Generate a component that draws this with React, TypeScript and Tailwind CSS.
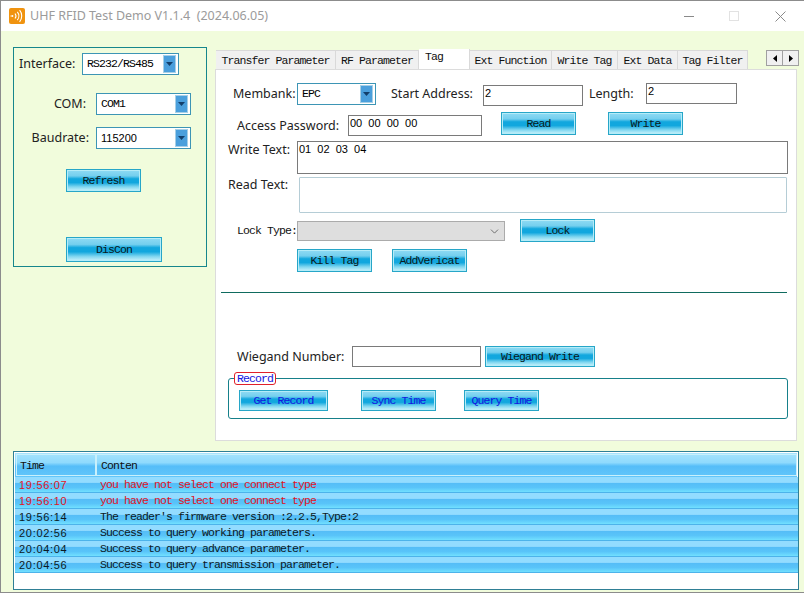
import React from 'react';
import { ChevronDown } from 'lucide-react';

const logRows = [
    { time: '19:56:07', text: 'you have not select one connect type', error: true },
    { time: '19:56:10', text: 'you have not select one connect type', error: true },
    { time: '19:56:14', text: "The reader's firmware version :2.2.5,Type:2", error: false },
    { time: '20:02:56', text: 'Success to query working parameters.', error: false },
    { time: '20:04:04', text: 'Success to query advance parameter.', error: false },
    { time: '20:04:56', text: 'Success to query transmission parameter.', error: false },
];

const tabs = [
    { label: 'Transfer Parameter', width: 'w-[120px]' },
    { label: 'RF Parameter', width: 'w-[83px]' },
    { label: 'Tag', width: 'w-[51px]', active: true },
    { label: 'Ext Function', width: 'w-[82px]' },
    { label: 'Write Tag', width: 'w-[66px]' },
    { label: 'Ext Data', width: 'w-[60px]' },
    { label: 'Tag Filter', width: 'w-[70px]' },
];

const mono = "font-['Liberation_Mono',monospace] text-[11.5px] tracking-[-0.9px]";
const label = "font-['Noto_Sans',sans-serif] text-[12.5px] text-[#222] whitespace-nowrap";

const GlossButton: React.FC<{ text: string; className: string; blue?: boolean }> = ({ text, className, blue }) => (
    <button
        className={`${className} shrink-0 flex items-center justify-center border border-[#27a6c8] shadow-[inset_0_0_0_1px_#b5ecf8] bg-[linear-gradient(#8fdbf4_0%,#74cfee_28%,#12a7de_42%,#12a7de_60%,#7fd6f0_80%,#cdf4fc_100%)] ${mono} ${blue ? 'text-[#1414e0]' : 'text-[#0a1a20]'}`}
    >
        {text}
    </button>
);

const Combo: React.FC<{ value: string; className: string; sans?: boolean }> = ({ value, className, sans }) => (
    <div className={`${className} shrink-0 h-[22px] bg-white border border-[#3d95b5] flex items-center justify-between pl-[4px] pr-[2px]`}>
        <span className={sans ? "font-['Liberation_Sans',sans-serif] text-[11px] text-black" : `${mono} text-black`}>{value}</span>
        <span className="w-[13px] h-[18px] bg-[#4a9fdc] border border-[#a6cfe6] flex items-center justify-center">
            <svg width="7" height="4" viewBox="0 0 7 4">
                <polygon points="0,0 7,0 3.5,4" fill="#123f6b" />
            </svg>
        </span>
    </div>
);

const TextBox: React.FC<{ value?: string; className: string }> = ({ value = '', className }) => (
    <div className={`${className} shrink-0 h-[21px] bg-white border border-[#7a7a7a] px-[1px] font-['Liberation_Sans',sans-serif] text-[11px] leading-[15px] text-black whitespace-pre`}>
        {value}
    </div>
);

export default function App() {
    return (
        <div className="w-[804px] h-[593px] overflow-hidden flex flex-col bg-[#f1fcdc] border border-[#8c8c8c] border-r-0">
            <div className="h-[30px] shrink-0 bg-white flex items-center pl-[8px]">
                <svg width="16" height="16" viewBox="0 0 16 16" className="shrink-0">
                    <rect width="16" height="16" rx="2" fill="#f0930f" />
                    <circle cx="3.4" cy="8" r="1" fill="#fff" />
                    <path d="M1.5 8h1" stroke="#fff" strokeWidth="1" />
                    <path d="M6 5.5a4 4 0 0 1 0 5M8.3 3.8a6.5 6.5 0 0 1 0 8.4M10.6 2.2a9 9 0 0 1 0 11.6" fill="none" stroke="#fff" strokeWidth="1.1" />
                </svg>
                <span className="ml-[5px] font-['Noto_Sans',sans-serif] text-[12.5px] text-[#9b9b9b] whitespace-pre">UHF RFID Test Demo V1.1.4  (2024.06.05)</span>
                <div className="ml-auto flex items-center">
                    <span className="w-[10px] h-[1px] bg-[#8a8a8a]" />
                    <span className="ml-[35px] w-[10px] h-[10px] border border-[#e2e2e2]" />
                    <svg width="11" height="11" viewBox="0 0 11 11" className="ml-[36px] mr-[18px]">
                        <path d="M0.5 0.5l10 10M10.5 0.5l-10 10" stroke="#8a8a8a" strokeWidth="1" />
                    </svg>
                </div>
            </div>

            <div className="flex items-start pl-[12px] pt-[16px]">
                <div className="w-[194px] h-[220px] shrink-0 border border-[#16868c] flex flex-col">
                    <div className="flex items-center mt-[5px] h-[22px]">
                        <span className={`${label} ml-[5px] w-[63px]`}>Interface:</span>
                        <Combo value="RS232/RS485" className="w-[97px]" />
                    </div>
                    <div className="flex items-center mt-[18px] h-[22px]">
                        <span className={`${label} w-[72px] text-right`}>COM:</span>
                        <Combo value="COM1" className="w-[95px] ml-[10px]" />
                    </div>
                    <div className="flex items-center mt-[12px] h-[22px]">
                        <span className={`${label} w-[75px] text-right`}>Baudrate:</span>
                        <Combo value="115200" sans className="w-[95px] ml-[7px]" />
                    </div>
                    <GlossButton text="Refresh" className="w-[75px] h-[23px] ml-[52px] mt-[20px]" />
                    <GlossButton text="DisCon" className="w-[96px] h-[25px] ml-[52px] mt-[45px]" />
                </div>

                <div className="w-[582px] ml-[8px] mt-[2px] shrink-0 flex flex-col">
                    <div className="h-[20px] flex items-end justify-between">
                        <div className="flex items-end pl-[1px]">
                            {tabs.map((tab) => (
                                <div
                                    key={tab.label}
                                    className={`${tab.width} ${mono} text-[#111] flex whitespace-nowrap border-r border-[#d9d9d9] ${tab.active ? 'h-[20px] bg-white pl-[6px] pt-[1px] leading-[14px]' : 'h-[19px] bg-[#f0f0f0] border-t justify-center items-center pt-[1px]'}`}
                                >
                                    {tab.label}
                                </div>
                            ))}
                        </div>
                        <div className="flex self-start mt-[1px] mr-[-2px]">
                            <span className="w-[17px] h-[16px] bg-[#f0f0f0] border border-[#a0a0a0] flex items-center justify-center">
                                <svg width="4" height="7" viewBox="0 0 4 7"><polygon points="4,0 4,7 0,3.5" fill="#000" /></svg>
                            </span>
                            <span className="w-[16px] h-[16px] bg-[#f0f0f0] border border-l-0 border-[#a0a0a0] flex items-center justify-center">
                                <svg width="4" height="7" viewBox="0 0 4 7"><polygon points="0,0 0,7 4,3.5" fill="#000" /></svg>
                            </span>
                        </div>
                    </div>

                    <div className="h-[372px] bg-white border border-[#dcdcdc] flex flex-col">
                        <div className="flex items-start mt-[13px] h-[23px]">
                            <span className={`${label} ml-[17px] w-[64px] leading-[22px]`}>Membank:</span>
                            <Combo value="EPC" className="w-[79px]" />
                            <span className={`${label} ml-[15px] w-[92px] leading-[22px]`}>Start Address:</span>
                            <TextBox className="w-[100px] mt-[2px]" value="2" />
                            <span className={`${label} ml-[6px] w-[57px] leading-[22px]`}>Length:</span>
                            <TextBox className="w-[91px]" value="2" />
                        </div>
                        <div className="flex items-start mt-[6px] h-[24px]">
                            <span className={`${label} ml-[21px] w-[111px] mt-[3px] leading-[22px]`}>Access Password:</span>
                            <TextBox className="w-[134px] mt-[3px]" value="00  00  00  00" />
                            <GlossButton text="Read" className="w-[75px] h-[23px] ml-[19px]" />
                            <GlossButton text="Write" className="w-[75px] h-[23px] ml-[32px]" />
                        </div>
                        <div className="flex items-start mt-[5px]">
                            <span className={`${label} ml-[12px] w-[69px] leading-[18px]`}>Write Text:</span>
                            <TextBox className="w-[491px] !h-[33px]" value="01  02  03  04" />
                        </div>
                        <div className="flex items-start mt-[3px]">
                            <span className={`${label} ml-[12px] w-[71px] leading-[16px]`}>Read Text:</span>
                            <div className="w-[488px] h-[36px] bg-white border border-[#b5cdd6] rounded-[1px]" />
                        </div>
                        <div className="flex items-start mt-[6px]">
                            <span className={`${mono} ml-[21px] w-[60px] mt-[2px] leading-[20px] text-[#111] whitespace-nowrap`}>Lock Type:</span>
                            <div className="w-[208px] h-[20px] mt-[2px] bg-[#dedede] border border-[#ababab] flex items-center justify-end pr-[3px]">
                                <ChevronDown size={13} strokeWidth={1.5} className="text-[#555]" />
                            </div>
                            <GlossButton text="Lock" className="w-[75px] h-[23px] ml-[15px]" />
                        </div>
                        <div className="flex items-start mt-[7px]">
                            <GlossButton text="Kill Tag" className="w-[75px] h-[23px] ml-[81px]" />
                            <GlossButton text="AddVericat" className="w-[75px] h-[23px] ml-[20px]" />
                        </div>
                        <div className="h-[1px] w-[566px] ml-[5px] mt-[20px] bg-[#0f6b5f]" />
                        <div className="flex items-start mt-[53px]">
                            <span className={`${label} ml-[21px] w-[115px] leading-[21px]`}>Wiegand Number:</span>
                            <TextBox className="w-[129px]" />
                            <GlossButton text="Wiegand Write" className="w-[110px] h-[21px] ml-[4px]" />
                        </div>
                        <div className="relative w-[560px] h-[41px] ml-[12px] mt-[11px] border border-[#16808a] rounded-[3px] flex items-start pl-[10px] pt-[11px]">
                            <span className={`absolute left-[5px] top-[-7px] h-[13px] w-[42px] bg-white border border-[#e0202a] rounded-[3px] flex items-center justify-center ${mono} text-[#1414e0]`}>Record</span>
                            <GlossButton text="Get Record" blue className="w-[89px] h-[21px]" />
                            <GlossButton text="Sync Time" blue className="w-[75px] h-[21px] ml-[33px]" />
                            <GlossButton text="Query Time" blue className="w-[75px] h-[21px] ml-[28px]" />
                        </div>
                    </div>
                </div>
            </div>

            <div className="w-[786px] h-[139px] ml-[12px] mt-[10px] shrink-0 bg-white border border-[#2f7f95] p-[1px]">
                <div className="flex h-[24px] w-[782px] bg-[linear-gradient(#a6e4fd_0%,#8fdafd_40%,#55bdf8_55%,#62c6fa_100%)]">
                    <div className={`${mono} w-[80px] ml-[1px] my-[1px] pl-[3px] pt-[1px] flex items-center text-[#111] border border-[#c8f0fc]`}>Time</div>
                    <div className={`${mono} flex-1 my-[1px] pl-[4px] pt-[1px] flex items-center text-[#111] border border-[#c8f0fc]`}>Conten</div>
                </div>
                {logRows.map((row) => (
                    <div
                        key={row.time}
                        className={`flex items-center h-[16px] w-[783px] pt-[1px] border-b border-[#4db3ea] bg-[linear-gradient(#93dcff_0%,#93dcff_36%,#55bdf7_42%,#59c4f9_70%,#72e0ff_100%)] ${row.error ? 'text-[#e0141e]' : 'text-[#0c1a24]'}`}
                    >
                        <span className="w-[85px] pl-[4px] font-['Liberation_Sans',sans-serif] text-[11px] tracking-[0.7px]">{row.time}</span>
                        <span className={`${mono} whitespace-pre`}>{row.text}</span>
                    </div>
                ))}
            </div>
        </div>
    );
}
